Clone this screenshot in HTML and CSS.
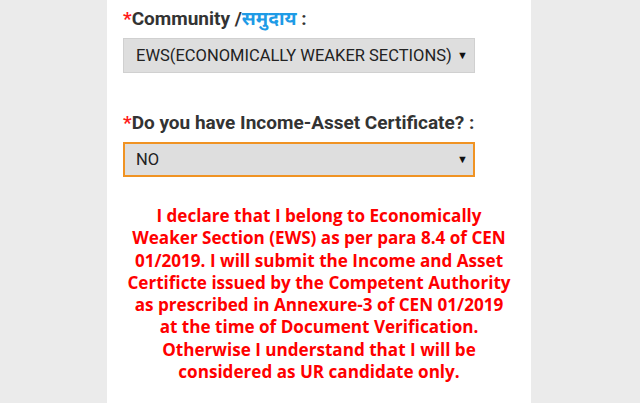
FILE: index.html
```html
<!DOCTYPE html>
<html lang="en">
<head>
<meta charset="utf-8">
<title>EWS Declaration</title>
<link rel="stylesheet" href="styles.css">
</head>
<body>
<div class="page">
  <main class="panel">
    <div class="field">
      <label class="label"><span class="req">*</span>Community /<span class="hi">समुदाय</span> :</label>
      <div class="select">
        <span class="value">EWS(ECONOMICALLY WEAKER SECTIONS)</span>
        <span class="arrow">▼</span>
      </div>
    </div>
    <div class="field second">
      <label class="label"><span class="req">*</span>Do you have Income-Asset Certificate? :</label>
      <div class="select focused">
        <span class="value">NO</span>
        <span class="arrow">▼</span>
      </div>
    </div>
    <p class="declare">I declare that I belong to Economically<br>Weaker Section (EWS) as per para 8.4 of CEN<br>01/2019. I will submit the Income and Asset<br>Certificte issued by the Competent Authority<br>as prescribed in Annexure-3 of CEN 01/2019<br>at the time of Document Verification.<br>Otherwise I understand that I will be<br>considered as UR candidate only.</p>
  </main>
</div>
</body>
</html>
```
FILE: styles.css
```css
html, body {
  margin: 0;
  padding: 0;
  height: 403px;
  overflow: hidden;
  background: #ebebeb;
}
.page {
  display: flex;
  justify-content: flex-start;
  padding-left: 107px;
  height: 403px;
}
.panel {
  width: 424px;
  background: #ffffff;
  padding: 8px 0 0 16px;
  box-sizing: border-box;
  font-family: Roboto, "Noto Sans", "Noto Sans Devanagari", sans-serif;
}
.field {
  display: flex;
  flex-direction: column;
}
.field.second {
  margin-top: 39px;
}
.label {
  font-size: 19px;
  font-weight: 700;
  color: #333333;
  line-height: 22px;
  height: 22px;
  margin-bottom: 8px;
}
.req {
  color: #ff1a1a;
}
.hi {
  color: #1e9be6;
}
.select {
  width: 352px;
  height: 35px;
  box-sizing: border-box;
  background: #dedede;
  border: 1px solid #d0d0d0;
  display: flex;
  align-items: center;
  justify-content: space-between;
  padding: 0 6px 0 12px;
  color: #222222;
  font-size: 16.5px;
}
.select.focused {
  border: 2px solid #f09323;
  padding-left: 11px;
  padding-right: 5px;
}
.arrow {
  font-size: 11px;
  color: #111111;
}
.declare {
  margin: 28px 0 0 -16px;
  width: 424px;
  padding: 0;
  box-sizing: border-box;
  text-align: center;
  color: #ff0000;
  font-family: "Open Sans", "Noto Sans", sans-serif;
  font-weight: 700;
  font-size: 17.1px;
  line-height: 22.3px;
  white-space: nowrap;
}
```
